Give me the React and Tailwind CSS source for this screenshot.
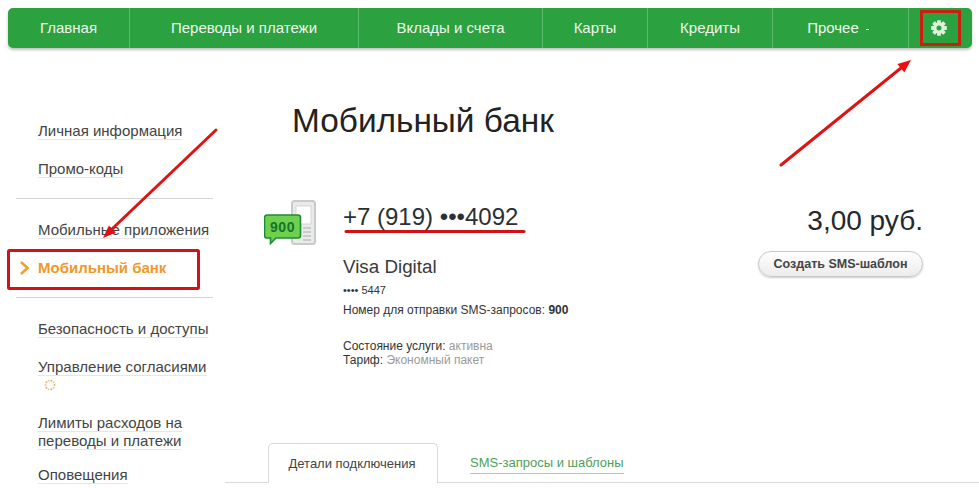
import React from "react";

const navItems = [
  ["Главная", "w-[122px]"],
  ["Переводы и платежи", "w-[229px]"],
  ["Вклады и счета", "w-[184px]"],
  ["Карты", "w-[105px]"],
  ["Кредиты", "w-[125px]"],
];

function SideLink({ children, className = "" }) {
  return (
    <a className={"block pl-[38px] pr-2 text-[15px] leading-[18px] text-[#444] " + className}>
      <span className="border-b border-[#e6e6e6]">{children}</span>
    </a>
  );
}

function Gear() {
  return (
    <svg width="16" height="16" viewBox="0 0 16 16" className="mr-[3px] block">
      <g fill="#dcf1dc">
        {[0, 45, 90, 135, 180, 225, 270, 315].map((a) => (
          <rect key={a} x="6.1" y="0.2" width="3.8" height="4" rx="0.5" transform={`rotate(${a} 8 8)`} />
        ))}
      </g>
      <circle cx="8" cy="8" r="4" fill="none" stroke="#dcf1dc" strokeWidth="3" />
    </svg>
  );
}

function SmsIcon() {
  return (
    <svg width="54" height="46" viewBox="0 0 54 46" className="block">
      <rect x="28" y="1" width="23" height="43" rx="2.5" fill="#e9ebea" stroke="#c9cbca" strokeWidth="2" />
      <rect x="32" y="6" width="15" height="18" fill="#fff" stroke="#d3d5d4" />
      <path d="M39 28h8M39 32h8M39 36h8M39 40h8" stroke="#c9cbca" strokeWidth="2" />
      <path d="M3 15h31a2.5 2.5 0 0 1 2.5 2.5v18a2.5 2.5 0 0 1-2.5 2.5H12l-5.5 5.5V38H3a2.5 2.5 0 0 1-2.5-2.5v-18A2.5 2.5 0 0 1 3 15z" fill="#6fcf4f" stroke="#1f8a36" strokeWidth="1.6" />
      <text x="18.5" y="31.5" textAnchor="middle" fontFamily="'Liberation Sans', sans-serif" fontWeight="700" fontSize="14" fill="#14752b" letterSpacing="0.5">900</text>
    </svg>
  );
}

function Spinner() {
  const dots = Array.from({ length: 10 }, (_, i) => (i * Math.PI) / 5);
  return (
    <svg width="12" height="12" viewBox="0 0 12 12" className="block">
      {dots.map((a, i) => (
        <circle key={i} cx={6 + 4.5 * Math.cos(a)} cy={6 + 4.5 * Math.sin(a)} r="1" fill={i % 2 ? "#f0c890" : "#e8ad6a"} />
      ))}
    </svg>
  );
}

function Annotations() {
  return (
    <svg width="979" height="488" className="absolute left-0 top-0 pointer-events-none">
      <path d="M216 130 L112 229" stroke="#dd1414" strokeWidth="3" strokeLinecap="round" />
      <path d="M103 238 L115.8 232.6 L108.9 225.4 Z" fill="#e01010" />
      <path d="M781 165 L901 68" stroke="#dd1414" strokeWidth="3" strokeLinecap="round" />
      <path d="M911 60 L904.4 72.5 L897.4 63.9 Z" fill="#f00d0d" />
      <path d="M346 231.5 H524" stroke="#cf1418" strokeWidth="3" strokeLinecap="round" />
      <rect x="8.5" y="250.5" width="190" height="38" rx="1" fill="none" stroke="#d80f16" strokeWidth="3" />
      <rect x="921.5" y="11.5" width="38" height="33" fill="none" stroke="#c8200f" strokeWidth="3" />
    </svg>
  );
}

export default function App() {
  return (
    <div className="relative h-[488px] w-[979px] overflow-hidden bg-white font-['Liberation_Sans',Arial,sans-serif] text-[#333]">
      <div className="px-2 pt-2">
        <nav className="flex h-10 w-[964px] rounded-[5px] bg-[#2ca140] text-[15px] text-[#eef7ee] shadow-[0_2px_3px_rgba(0,0,0,0.25)]">
          {navItems.map(([label, w]) => (
            <div key={label} className={"flex items-center justify-center border-r border-[#5dba6c] pt-[1px] " + w}>
              {label}
            </div>
          ))}
          <div className="flex w-[136px] items-center justify-center gap-[7px] border-r border-[#5dba6c] pt-[1px] pr-[5px]">
            Прочее <span className="mt-[2px] h-[1px] w-[3px] bg-[#eef7ee]" />
          </div>
          <div className="flex flex-1 items-center justify-center">
            <Gear />
          </div>
        </nav>
      </div>

      <div className="flex">
        <aside className="w-[225px] shrink-0 pt-[74px]">
          <SideLink>Личная информация</SideLink>
          <SideLink className="mt-5">Промо-коды</SideLink>
          <div className="ml-4 mr-3 mt-5 border-t border-[#d5d5d5]" />
          <SideLink className="mt-[22px]">Мобильные приложения</SideLink>
          <div className="mt-5 flex h-[18px] items-center pl-[19px] text-[15px] font-bold text-[#f0982a]">
            <svg width="11" height="16" viewBox="0 0 11 16" className="mr-[8px]">
              <path d="M2 2 8.5 8 2 14" fill="none" stroke="#f0a030" strokeWidth="2.6" />
            </svg>
            Мобильный банк
          </div>
          <div className="ml-4 mr-3 mt-5 border-t border-[#d5d5d5]" />
          <SideLink className="mt-[22px]">Безопасность и доступы</SideLink>
          <SideLink className="mt-5">Управление согласиями</SideLink>
          <div className="ml-[44px] mt-[3px]">
            <Spinner />
          </div>
          <SideLink className="mt-[23px]">
            Лимиты расходов на
            <br />
            переводы и платежи
          </SideLink>
          <SideLink className="mt-[16px]">Оповещения</SideLink>
        </aside>

        <main className="flex-1 pr-[56px]">
          <h1 className="ml-[67px] mt-[51px] text-[33.4px] font-normal leading-[44px] text-[#222]">Мобильный банк</h1>
          <div className="ml-[39px] mt-[52px] flex">
            <div className="mr-[27px] mt-[5px] h-[46px] w-[52px] shrink-0">
              <SmsIcon />
            </div>
            <div className="flex-1">
              <div className="mt-[6px] text-[24px] leading-[32px] text-[#2a2f33]">+7 (919) •••4092</div>
              <div className="mt-[23px] text-[18.8px] leading-[22px] text-[#3a3a3a]">Visa Digital</div>
              <div className="mt-[4px] text-[11px] leading-[16px]">•••• 5447</div>
              <div className="mt-[4px] text-[12px] leading-[16px]">
                Номер для отправки SMS-запросов: <b>900</b>
              </div>
              <div className="mt-[21px] text-[12px] leading-[14px]">
                Состояние услуги: <span className="text-[#9a9a9a]">активна</span>
                <br />
                Тариф: <span className="text-[#9a9a9a]">Экономный пакет</span>
              </div>
            </div>
            <div className="flex flex-col items-end">
              <div className="mt-[9px] text-[28px] leading-[34px] text-[#23282c]">3,00 руб.</div>
              <button className="mt-[13px] h-[26px] w-[165px] rounded-full border border-[#c8c8c8] bg-gradient-to-b from-white to-[#ececec] text-[12.5px] font-bold text-[#444] shadow-[0_1px_2px_rgba(0,0,0,0.2)]">
                Создать SMS-шаблон
              </button>
            </div>
          </div>
        </main>
      </div>

      <div className="absolute bottom-[5px] left-[225px] right-0 flex h-[41px] items-stretch border-b border-[#d9d9d9]">
        <div className="relative top-[1px] ml-[43px] flex w-[170px] items-center justify-center rounded-t-[5px] border border-b-0 border-[#d9d9d9] bg-white pr-[2px] text-[13px] text-[#444]">
          Детали подключения
        </div>
        <div className="ml-[32px] flex items-center pt-[3px] text-[13px] text-[#4f9e57]">
          <span className="border-b border-[#a8d0ad]">SMS-запросы и шаблоны</span>
        </div>
      </div>

      <Annotations />
    </div>
  );
}
